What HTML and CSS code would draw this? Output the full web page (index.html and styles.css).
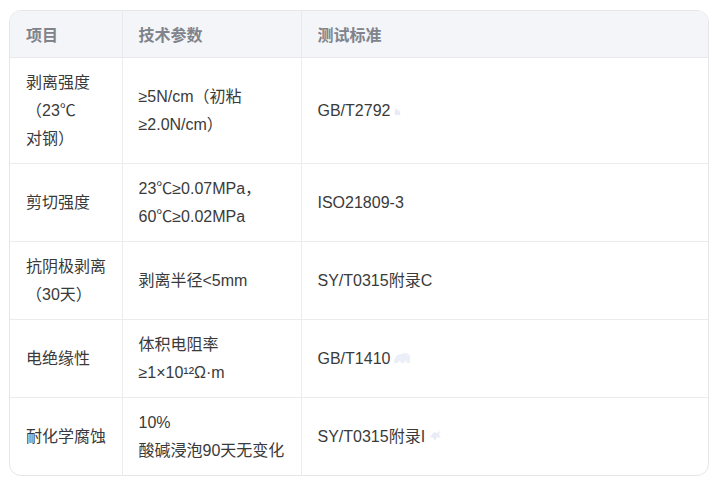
FILE: index.html
```html
<!DOCTYPE html>
<html lang="zh">
<head>
<meta charset="utf-8">
<link rel="stylesheet" href="styles.css">
</head>
<body>
<div class="wrap">
<table class="spec">
<thead>
<tr><th class="c1">项目</th><th class="c2">技术参数</th><th class="c3">测试标准</th></tr>
</thead>
<tbody>
<tr>
<td>剥离强度<br>（23℃<br>对钢）</td>
<td>≥5N/cm（初粘<br>≥2.0N/cm）</td>
<td>GB/T2792<svg class="cite" width="10" height="11" viewBox="0 0 10 11"><path d="M2 9 C1 6 2 3 4 2 C4 4 5 5 6 4 C7 6 8 8 7 9 Z" fill="#e8ebf5"/></svg></td>
</tr>
<tr>
<td>剪切强度</td>
<td>23℃≥0.07MPa，<br>60℃≥0.02MPa</td>
<td>ISO21809-3</td>
</tr>
<tr>
<td>抗阴极剥离<br>（30天）</td>
<td>剥离半径&lt;5mm</td>
<td>SY/T0315附录C</td>
</tr>
<tr>
<td>电绝缘性</td>
<td>体积电阻率<br>≥1×10¹²Ω·m</td>
<td>GB/T1410<svg class="cite" width="18" height="14" viewBox="0 0 18 14"><path d="M1 12 C1 6 4 3 9 3 C12 1 15 2 17 5 L17 12 L14 12 L13 9 L11 12 L8 12 L7 9 L5 12 Z" fill="#eceef8"/></svg></td>
</tr>
<tr>
<td>耐化学腐蚀</td>
<td>10%<br>酸碱浸泡90天无变化</td>
<td>SY/T0315附录I<svg class="cite" width="14" height="14" viewBox="0 0 14 14"><path d="M2 8 L6 3 L9 4 L12 2 L11 6 L13 9 L9 8 L7 12 L5 9 Z" fill="#e9ecf6"/></svg></td>
</tr>
</tbody>
</table>
</div>
</body>
</html>
```
FILE: styles.css
```css
html, body {
  margin: 0;
  padding: 0;
  background: #ffffff;
}
body {
  padding: 10px 11px 10px 9px;
  font-family: "Liberation Sans", "Noto Sans CJK SC", sans-serif;
  font-size: 16px;
  color: #333333;
}
.wrap {
  border: 1px solid #e6e6ea;
  border-radius: 12px;
  overflow: hidden;
}
.spec {
  width: 100%;
  border-collapse: collapse;
  table-layout: fixed;
}
.spec th {
  background: #f4f5f8;
  color: #80838b;
  font-weight: bold;
  font-size: 16px;
  text-align: left;
  height: 46px;
  padding: 0 16px;
  border-bottom: 1px solid #e9e9ec;
  border-right: 1px solid #e9e9ec;
  box-sizing: border-box;
  line-height: 20px;
  font-family: "Noto Sans CJK SC", sans-serif;
}
.spec th:last-child,
.spec td:last-child {
  border-right: none;
}
.spec .c1 { width: 112px; }
.spec .c2 { width: 179px; }
.spec td {
  padding: 11px 6px 10px 16px;
  line-height: 28px;
  vertical-align: middle;
  border-bottom: 1px solid #ececef;
  border-right: 1px solid #ececef;
  color: #3a3a3a;
}
.spec tbody tr:last-child td {
  border-bottom: none;
}
.cite {
  display: inline-block;
  vertical-align: -1px;
  margin-left: 3px;
}
```
